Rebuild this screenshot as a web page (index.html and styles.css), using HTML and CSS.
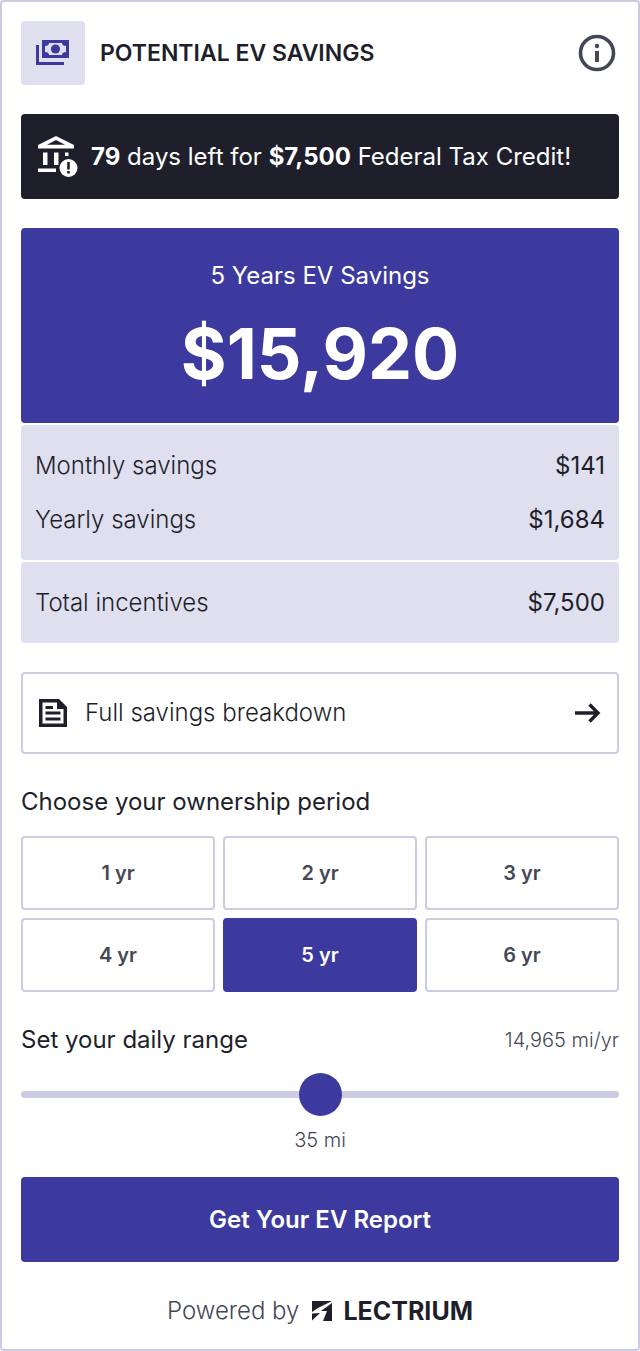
FILE: index.html
```html
<!DOCTYPE html>
<html lang="en">
<head>
    <meta charset="UTF-8">
    <meta name="viewport" content="width=device-width, initial-scale=1.0">
    <title>Potential EV Savings</title>
    <link rel="stylesheet" href="styles.css">
</head>
<body>

<main class="widget">
    <header class="header">
        <div class="header-icon">
            <svg width="34" height="26" viewBox="0 0 34 26" fill="#3c3a9e">
                <path fill-rule="evenodd" d="M6 0h27v18H6zM13 3q0 3-4 3v6q4 0 4 3h13q0-3 4-3V6q-4 0-4-3z"/>
                <circle cx="19.500" cy="9" r="4.600"/>
                <path d="M0 5h3v17h25v3H0z"/>
            </svg>
        </div>
        <h1>POTENTIAL EV SAVINGS</h1>
        <button type="button" class="info-button" aria-label="More information">
            <svg width="38" height="38" viewBox="0 0 38 38">
                <circle cx="19" cy="19" r="16.500" fill="none" stroke="#444856" stroke-width="3.600"/>
                <circle cx="19" cy="12" r="2.200" fill="#444856"/>
                <path d="M17 17h4v11h-4z" fill="#444856"/>
            </svg>
        </button>
    </header>

    <p class="banner">
        <svg width="40" height="42" viewBox="0 0 40 42" fill="#fff">
            <path fill-rule="evenodd" d="M18 0L36 9v3.500H0V9zM18 4L9 8.800h18z"/>
            <path d="M5 16.500h4.500V29H5zM16 16.500h4.500V29H16zM27 16.500h3.500V20H27zM0 32.500h18V36H0z"/>
            <circle cx="30.500" cy="32" r="9"/>
            <path d="M29.200 26h2.600v7.500h-2.600zM29.200 35h2.600v2.500h-2.600z" fill="#1e1f2b"/>
        </svg>
        <span><b>79</b> days left for <b>$7,500</b> Federal Tax Credit!</span>
    </p>

    <section class="savings">
        <div class="total">
            <p>5 Years EV Savings</p>
            <strong>$15,920</strong>
        </div>
        <dl class="rows">
            <div><dt>Monthly savings</dt><dd>$141</dd></div>
            <div><dt>Yearly savings</dt><dd>$1,684</dd></div>
        </dl>
        <dl class="rows">
            <div><dt>Total incentives</dt><dd>$7,500</dd></div>
        </dl>
    </section>

    <a href="#" class="breakdown">
        <svg width="28" height="28" viewBox="0 0 28 28" fill="#1e1f2b">
            <path fill-rule="evenodd" d="M0 0h20l8 8v20H0zM3.500 3.500v21h21V10H18V3.500z"/>
            <path d="M6.500 7H14v3H6.500zM6.500 12.500h15v3h-15zM6.500 18.500h15v3h-15z"/>
        </svg>
        <span>Full savings breakdown</span>
        <svg width="26" height="20" viewBox="0 0 26 20" fill="none" stroke="#1e1f2b" stroke-width="3.400">
            <path d="M0 10h23M14.500 1.500L23 10l-8.500 8.500"/>
        </svg>
    </a>

    <h2>Choose your ownership period</h2>
    <div class="periods">
        <button type="button">1 yr</button>
        <button type="button">2 yr</button>
        <button type="button">3 yr</button>
        <button type="button">4 yr</button>
        <button type="button" class="active">5 yr</button>
        <button type="button">6 yr</button>
    </div>

    <div class="range-header">
        <label for="range">Set your daily range</label>
        <span>14,965 mi/yr</span>
    </div>
    <input type="range" id="range" class="range" min="0" max="70" value="35">
    <output class="range-value" for="range">35 mi</output>

    <button type="button" class="report-button">Get Your EV Report</button>

    <footer class="footer">
        <span>Powered by</span>
        <a href="#" class="brand">
            <svg width="20" height="20" viewBox="0 0 20 20" fill="#1e1f2b">
                <path d="M0 0h20L6 7 0 11z"/>
                <path d="M20 2v18h-9l4-10H9z"/>
                <path d="M0 12.500l8-.5-8 7.500z"/>
            </svg>
            LECTRIUM
        </a>
    </footer>
</main>

</body>
</html>
```
FILE: styles.css
```css
* {
    box-sizing: border-box;
}

body {
    margin: 0;
    background: #fff;
    color: #1e1f2b;
    font-family: Inter, "Liberation Sans", sans-serif;
    font-size: 24px;
    line-height: 32px;
}

h1, h2, p, dl, dd {
    margin: 0;
}

a {
    color: inherit;
    text-decoration: none;
}

button {
    font: inherit;
    cursor: pointer;
}

.widget {
    display: flex;
    flex-direction: column;
    padding: 19px 19px 22px;
    border: 2px solid #cbcce2;
    border-radius: 4px;
}

.header {
    display: flex;
    align-items: center;
    gap: 15px;
    margin-bottom: 29px;
}

.header-icon {
    display: flex;
    align-items: center;
    justify-content: center;
    width: 64px;
    height: 64px;
    border-radius: 4px;
    background: #e0dfef;
}

h1 {
    flex: 1;
    font-size: 23px;
    font-weight: 600;
}

.info-button {
    display: flex;
    padding: 0 3px;
    border: none;
    background: none;
}

.banner {
    display: flex;
    align-items: center;
    gap: 13px;
    min-height: 85px;
    margin-bottom: 29px;
    padding: 0 17px;
    border-radius: 4px;
    background: #1e1f2b;
    color: #fff;
}

.banner b {
    font-weight: 700;
}

.savings {
    display: flex;
    flex-direction: column;
    gap: 2px;
    margin-bottom: 29px;
}

.total {
    padding: 32px 16px 20px;
    border-radius: 4px;
    background: #3c3a9e;
    color: #fff;
    text-align: center;
}

.total strong {
    display: block;
    padding-top: 12px;
    font-size: 70px;
    font-weight: 700;
    line-height: 99px;
}

.rows {
    padding: 14px 14px 13px;
    border-radius: 4px;
    background: #e0dfef;
}

.rows div {
    display: flex;
    justify-content: space-between;
    padding: 11px 0;
}

.rows dt {
    font-weight: 300;
}

.breakdown {
    display: flex;
    align-items: center;
    gap: 18px;
    min-height: 82px;
    margin-bottom: 32px;
    padding: 0 16px;
    border: 2px solid #cbcce2;
    border-radius: 4px;
    font-weight: 300;
}

.breakdown span {
    flex: 1;
}

h2 {
    margin-bottom: 18px;
    font-size: 24px;
    font-weight: 400;
}

.periods {
    display: grid;
    grid-template-columns: repeat(3, 1fr);
    gap: 8px;
    margin-bottom: 32px;
}

.periods button {
    height: 74px;
    border: 2px solid #cbcce2;
    border-radius: 4px;
    background: #fff;
    color: #444856;
    font-size: 20px;
    font-weight: 600;
}

.periods .active {
    border-color: #3c3a9e;
    background: #3c3a9e;
    color: #fff;
}

.range-header {
    display: flex;
    align-items: center;
    justify-content: space-between;
    margin-bottom: 17px;
}

.range-header span,
.range-value {
    color: #444856;
    font-size: 20px;
    font-weight: 300;
}

.range {
    -webkit-appearance: none;
    appearance: none;
    width: 100%;
    height: 43px;
    margin: 0;
    background: none;
}

.range::-webkit-slider-runnable-track {
    height: 7px;
    border-radius: 4px;
    background: #cbcce2;
}

.range::-webkit-slider-thumb {
    -webkit-appearance: none;
    width: 43px;
    height: 43px;
    margin-top: -18px;
    border-radius: 50%;
    background: #3c3a9e;
}

.range-value {
    margin: 8px 0 21px;
    text-align: center;
}

.report-button {
    min-height: 85px;
    margin-bottom: 33px;
    border: none;
    border-radius: 4px;
    background: #3c3a9e;
    color: #fff;
    font-size: 24px;
    font-weight: 600;
}

.footer {
    display: flex;
    align-items: center;
    justify-content: center;
    gap: 13px;
    color: #444856;
    font-weight: 300;
}

.brand {
    display: flex;
    align-items: center;
    gap: 11px;
    color: #1e1f2b;
    font-size: 25px;
    font-weight: 700;
}
```
